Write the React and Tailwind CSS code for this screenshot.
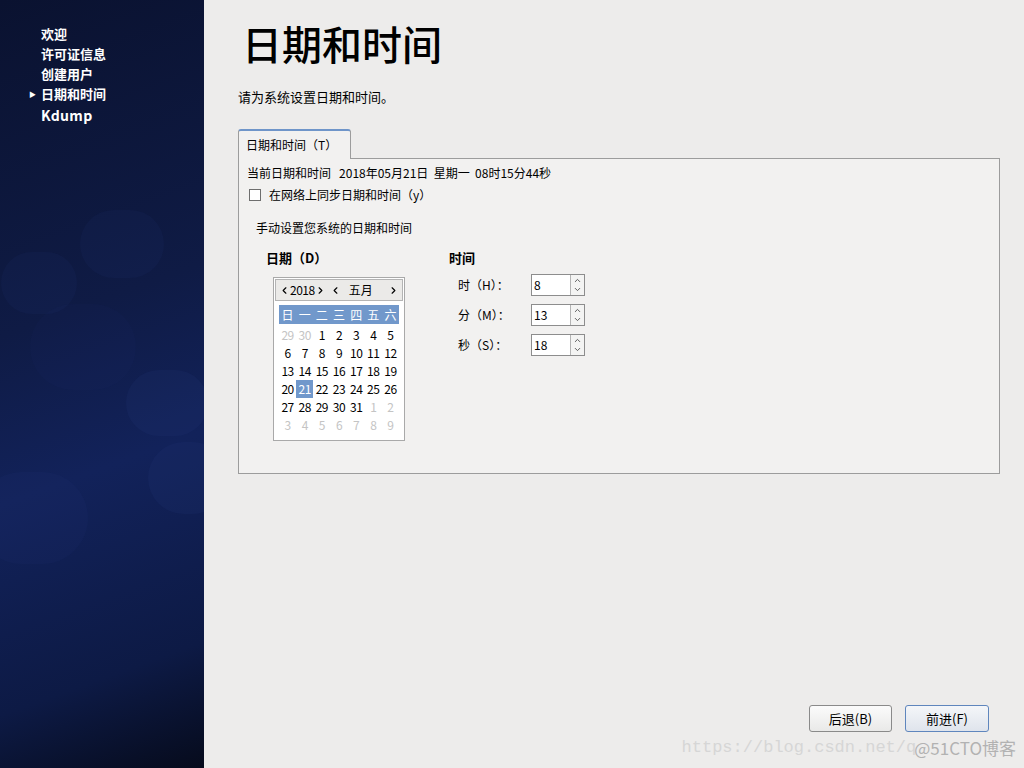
import { ChevronLeft, ChevronRight, ChevronUp, ChevronDown } from "lucide-react";

const FONT = { fontFamily: '"Noto Sans CJK SC", "DejaVu Sans", sans-serif' };

const navItems = ["欢迎", "许可证信息", "创建用户", "日期和时间", "Kdump"];
const weekDays = ["日", "一", "二", "三", "四", "五", "六"];

const weeks = [
  [[29, 1], [30, 1], [1], [2], [3], [4], [5]],
  [[6], [7], [8], [9], [10], [11], [12]],
  [[13], [14], [15], [16], [17], [18], [19]],
  [[20], [21], [22], [23], [24], [25], [26]],
  [[27], [28], [29], [30], [31], [1, 1], [2, 1]],
  [[3, 1], [4, 1], [5, 1], [6, 1], [7, 1], [8, 1], [9, 1]],
];

function Sidebar() {
  return (
    <aside className="relative w-[204px] shrink-0 overflow-hidden bg-[linear-gradient(160deg,#0a1230_0%,#0f1b45_40%,#12225a_60%,#0d1a45_85%,#060b1c_100%)]">
      {/* faint bubbles */}
      <div className="absolute left-[80px] top-[210px] h-[68px] w-[84px] rounded-full bg-[#2a3c80]/10" />
      <div className="absolute left-[1px] top-[252px] h-[62px] w-[76px] rounded-full bg-[#2a3c80]/10" />
      <div className="absolute left-[30px] top-[304px] h-[86px] w-[106px] rounded-full bg-[#2a3c80]/5" />
      <div className="absolute left-[126px] top-[370px] h-[66px] w-[82px] rounded-full bg-[#2a3c80]/15" />
      <div className="absolute left-[148px] top-[442px] h-[72px] w-[80px] rounded-full bg-[#2a3c80]/15" />
      <div className="absolute left-[-24px] top-[472px] h-[92px] w-[112px] rounded-full bg-[#2a3c80]/10" />
      <ul className="relative pt-[24px] pl-[41px] text-[13px] font-bold text-white">
        {navItems.map((item, i) => (
          <li key={item} className={`relative h-[20px] leading-[20px] ${i === 4 ? "h-[22px] text-[14px] leading-[22px] tracking-wide" : ""}`}>
            {i === 3 && (
              <span className="absolute left-[-12px] top-[0px] text-[7px]">▶</span>
            )}
            {item}
          </li>
        ))}
      </ul>
    </aside>
  );
}

function Calendar() {
  return (
    <div className="ml-[7px] mt-[10px] w-[132px] border border-[#a9a9a9] bg-white p-[1px]">
      <div className="flex h-[22px] items-center border border-[#b4b4b4] bg-[#ebeae8] px-[3px] text-[12px] text-black">
        <ChevronLeft size={11} strokeWidth={2.5} />
        <span className="tracking-[-0.5px]">2018</span>
        <ChevronRight size={11} strokeWidth={2.5} />
        <ChevronLeft size={11} strokeWidth={2.5} className="ml-[4px]" />
        <span className="ml-[8px]">五月</span>
        <ChevronRight size={11} strokeWidth={2.5} className="ml-auto" />
      </div>
      <div className="mx-[4px] mt-[4px] grid grid-cols-7 bg-[#7198cb] text-[12px] leading-[19px] text-white">
        {weekDays.map((d) => (
          <span key={d} className="text-center">{d}</span>
        ))}
      </div>
      <div className="mx-[4px] mt-[2px] mb-[5px] grid grid-cols-7 text-[12px] leading-[18px] tracking-[-0.5px]">
        {weeks.flat().map(([n, dim], i) => (
          <span
            key={i}
            className={`text-center ${dim ? "text-[#c4c4c4]" : "text-black"} ${n === 21 && !dim ? "bg-[#7198cb] text-white" : ""}`}
          >
            {n}
          </span>
        ))}
      </div>
    </div>
  );
}

function Spin({ label, value }) {
  return (
    <div className="flex h-[30px] items-center">
      <span className="w-[82px] pl-[9px] text-[12px] text-black">{label}</span>
      <div className="flex h-[22px] w-[54px] border border-[#8d8d8d] bg-white">
        <span className="flex-1 pl-[2px] text-[12px] leading-[20px]">{value}</span>
        <div className="flex w-[14px] flex-col border-l border-[#b4b4b4] bg-[#f4f4f3] text-[#555]">
          <ChevronUp size={9} strokeWidth={2.5} className="mx-auto mt-[1px]" />
          <ChevronDown size={9} strokeWidth={2.5} className="mx-auto" />
        </div>
      </div>
    </div>
  );
}

export default function App() {
  return (
    <div className="flex h-[768px] w-[1024px] overflow-hidden bg-[#edeceb]" style={FONT}>
      <Sidebar />
      <main className="relative flex flex-1 flex-col pl-[34px] pr-[24px]">
        <h1 className="mt-[20px] pl-[4px] text-[40px] leading-[46px] font-medium text-black">日期和时间</h1>
        <p className="mt-[22px] text-[13px] leading-[18px] text-black">请为系统设置日期和时间。</p>

        <div className="mt-[23px] flex">
          <div className="relative z-10 -mb-px flex h-[30px] w-[113px] items-center rounded-t-[3px] border border-b-0 border-[#9c9c9c] border-t-[2px] border-t-[#6f95c9] bg-[#f2f1f0] pl-[7px] text-[12px] text-black">
            日期和时间（T）
          </div>
        </div>
        <section className="h-[316px] w-[762px] border border-[#9c9c9c] bg-[#f2f1f0] px-[8px] pt-[5px] text-[12px] text-black">
          <p className="leading-[18px]">当前日期和时间&nbsp;&nbsp;&nbsp;2018年05月21日&nbsp;&nbsp;星期一&nbsp;&nbsp;08时15分44秒</p>
          <label className="mt-[4px] flex items-center gap-[8px] pl-[2px] leading-[18px]">
            <span className="h-[12px] w-[12px] border border-[#6e6e6e] bg-white" />
            在网络上同步日期和时间（y）
          </label>
          <p className="mt-[15px] pl-[9px] leading-[18px]">手动设置您系统的日期和时间</p>
          <div className="mt-[12px] flex pl-[19px]">
            <div className="w-[183px]">
              <p className="text-[13px] font-bold leading-[18px]">日期（D）</p>
              <Calendar />
            </div>
            <div>
              <p className="text-[13px] font-bold leading-[18px]">时间</p>
              <div className="mt-[3px]">
                <Spin label="时（H）：" value="8" />
                <Spin label="分（M）：" value="13" />
                <Spin label="秒（S）：" value="18" />
              </div>
            </div>
          </div>
        </section>

        <div className="mt-auto mb-[36px] flex justify-end gap-[13px] pr-[11px]">
          <button className="h-[27px] w-[83px] rounded-[3px] border border-[#8a8a8a] bg-[linear-gradient(#fbfbfb,#e9e9e8)] text-[13px] text-black">
            后退(B)
          </button>
          <button className="h-[27px] w-[84px] rounded-[3px] border border-[#5f86bd] bg-[linear-gradient(#f4f6f9,#dfe4ec)] text-[13px] text-black">
            前进(F)
          </button>
        </div>
        <div className="absolute bottom-[8px] right-[8px] flex items-center">
          <span className="text-[17px] text-[#d6d6d6]" style={{ fontFamily: '"Liberation Mono", monospace' }}>
            https://blog.csdn.net/q
          </span>
          <span className="ml-[-2px] text-[17px] text-[#b2b2b2]">@51CTO博客</span>
        </div>
      </main>
    </div>
  );
}
